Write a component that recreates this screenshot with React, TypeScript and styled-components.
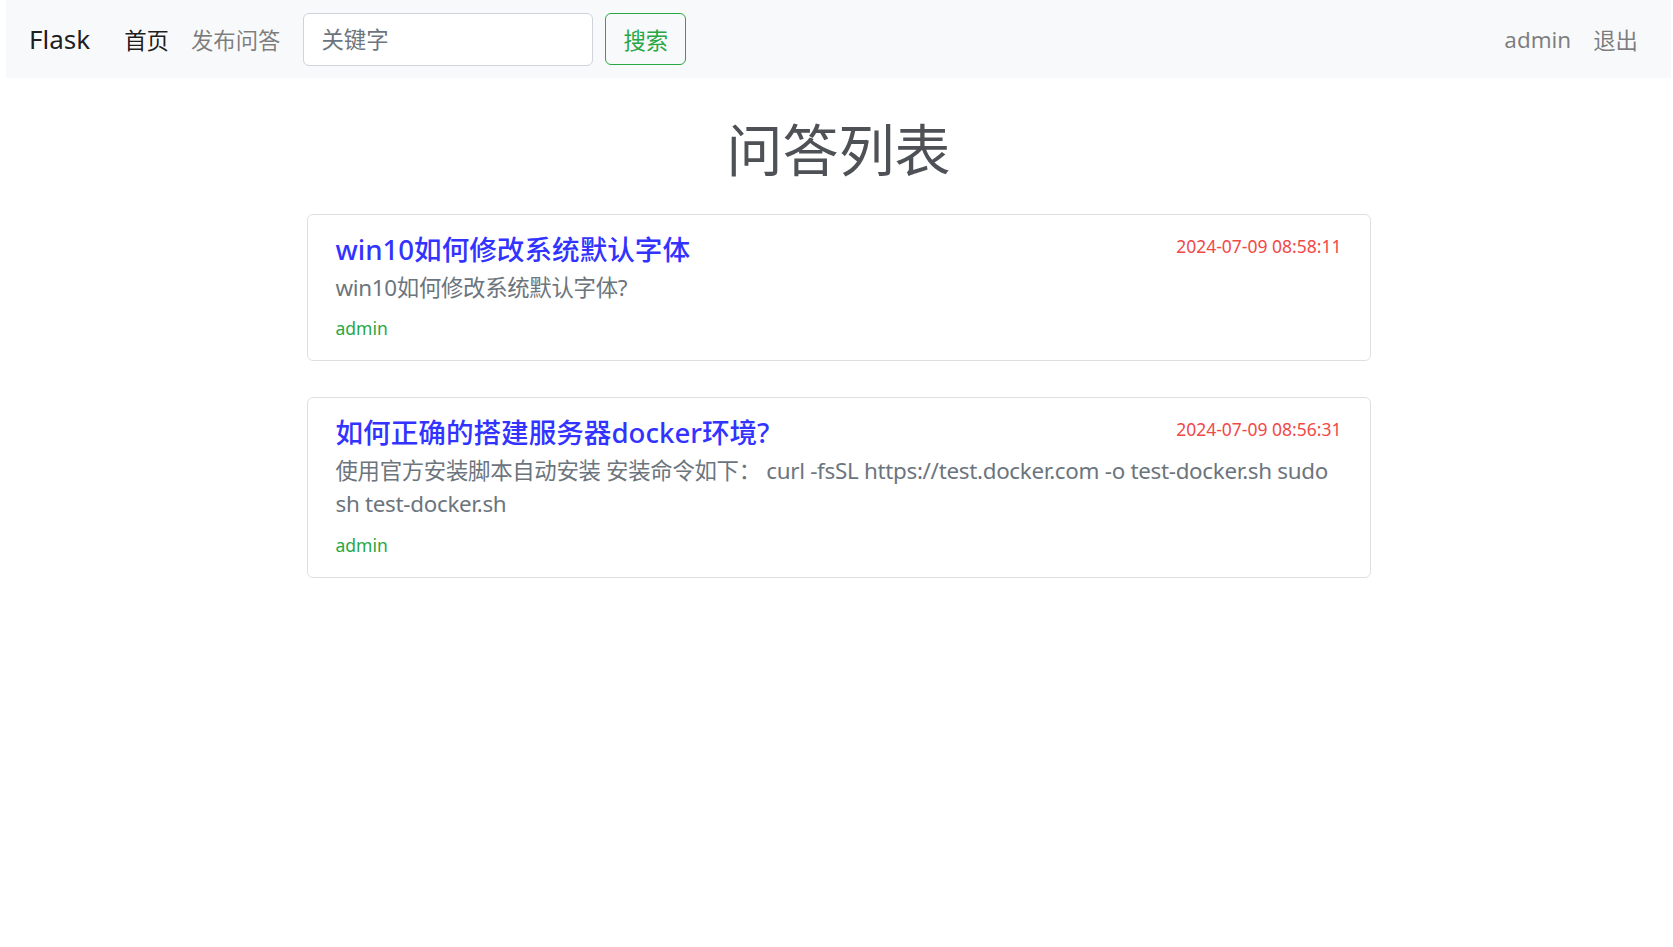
import styled, { createGlobalStyle } from 'styled-components';

type Question = {
    id: number;
    title: string;
    content: string;
    author: string;
    createTime: string;
};

const questions: Question[] = [
    {
        id: 1,
        title: "win10如何修改系统默认字体",
        content: "win10如何修改系统默认字体?",
        author: "admin",
        createTime: "2024-07-09 08:58:11",
    },
    {
        id: 2,
        title: "如何正确的搭建服务器docker环境?",
        content: "使用官方安装脚本自动安装 安装命令如下： curl -fsSL https://test.docker.com -o test-docker.sh sudo sh test-docker.sh",
        author: "admin",
        createTime: "2024-07-09 08:56:31",
    },
];

const GlobalStyle = createGlobalStyle`
    * {
        box-sizing: border-box;
    }
    body {
        margin: 0;
        background: #fff;
        font-family: "Segoe UI", "Noto Sans", "Noto Sans CJK SC", sans-serif;
        color: #212529;
    }
`;

export default function App() {
    return (
        <>
            <GlobalStyle/>
            <Page>
                <StyledNav>
                    <Brand href="#">Flask</Brand>
                    <NavLinks>
                        <NavItem href="#" $active>首页</NavItem>
                        <NavItem href="#">发布问答</NavItem>
                    </NavLinks>
                    <SearchForm onSubmit={(e) => e.preventDefault()}>
                        <SearchInput type="text" placeholder="关键字"/>
                        <SearchButton type="submit">搜索</SearchButton>
                    </SearchForm>
                    <UserLinks>
                        <NavItem href="#">admin</NavItem>
                        <NavItem href="#">退出</NavItem>
                    </UserLinks>
                </StyledNav>

                <Container>
                    <PageTitle>问答列表</PageTitle>
                    {questions.map((q) => (
                        <Card key={q.id}>
                            <CardHead>
                                <CardTitle href="#">{q.title}</CardTitle>
                                <CardDate>{q.createTime}</CardDate>
                            </CardHead>
                            <CardText>{q.content}</CardText>
                            <CardAuthor>{q.author}</CardAuthor>
                        </Card>
                    ))}
                </Container>
            </Page>
        </>
    )
}

const Page = styled.div`
    padding: 0 2px 0 6px;
`;

const StyledNav = styled.nav`
    display: flex;
    align-items: center;
    height: 78px;
    padding: 0 22px 0 23px;
    background-color: #f8f9fa;
`;

const Brand = styled.a`
    font-size: 26px;
    color: rgba(0, 0, 0, 0.9);
    text-decoration: none;
    margin-right: 23px;
    line-height: 1.5;
`;

const NavLinks = styled.div`
    display: flex;
    align-items: center;
`;

const NavItem = styled.a<{ $active?: boolean }>`
    font-size: 22.4px;
    padding: 8px 11px;
    color: ${(p) => (p.$active ? "rgba(0, 0, 0, 0.9)" : "rgba(0, 0, 0, 0.5)")};
    text-decoration: none;
`;

const SearchForm = styled.form`
    display: flex;
    align-items: center;
    gap: 12px;
    margin-left: 12px;
`;

const SearchInput = styled.input`
    width: 290px;
    height: 53px;
    padding: 0 17px;
    font-size: 22.4px;
    font-family: inherit;
    color: #495057;
    background: #fff;
    border: 1px solid #ced4da;
    border-radius: 6px;
    outline: none;

    &::placeholder {
        color: #6c757d;
    }
`;

const SearchButton = styled.button`
    height: 52px;
    padding: 0 17px;
    font-size: 22.4px;
    font-family: inherit;
    color: #28a745;
    background: transparent;
    border: 1px solid #28a745;
    border-radius: 6px;
    cursor: pointer;
`;

const UserLinks = styled.div`
    display: flex;
    align-items: center;
    margin-left: auto;
`;

const Container = styled.main`
    width: 1064px;
    margin: 0 auto;
    padding-top: 38px;
`;

const PageTitle = styled.h1`
    margin: 0 0 31px;
    text-align: center;
    font-size: 56px;
    font-weight: 400;
    line-height: 1.2;
    color: #4e5256;
`;

const Card = styled.div`
    border: 1px solid rgba(0, 0, 0, 0.125);
    border-radius: 6px;
    padding: 18px 28px 19px;
    margin-bottom: 36px;
`;

const CardHead = styled.div`
    display: flex;
    justify-content: space-between;
    align-items: flex-start;
`;

const CardTitle = styled.a`
    font-size: 27.6px;
    font-weight: 500;
    line-height: 1.2;
    color: #3333ff;
    text-decoration: none;
`;

const CardDate = styled.span`
    font-size: 17.5px;
    line-height: 26px;
    color: #f14848;
`;

const CardText = styled.p`
    margin: 4.4px 0 0;
    font-size: 22.4px;
    line-height: 1.5;
    letter-spacing: -0.3px;
    color: #6c757d;
`;

const CardAuthor = styled.div`
    margin-top: 11px;
    font-size: 17.5px;
    line-height: 26px;
    color: #28a745;
`;
